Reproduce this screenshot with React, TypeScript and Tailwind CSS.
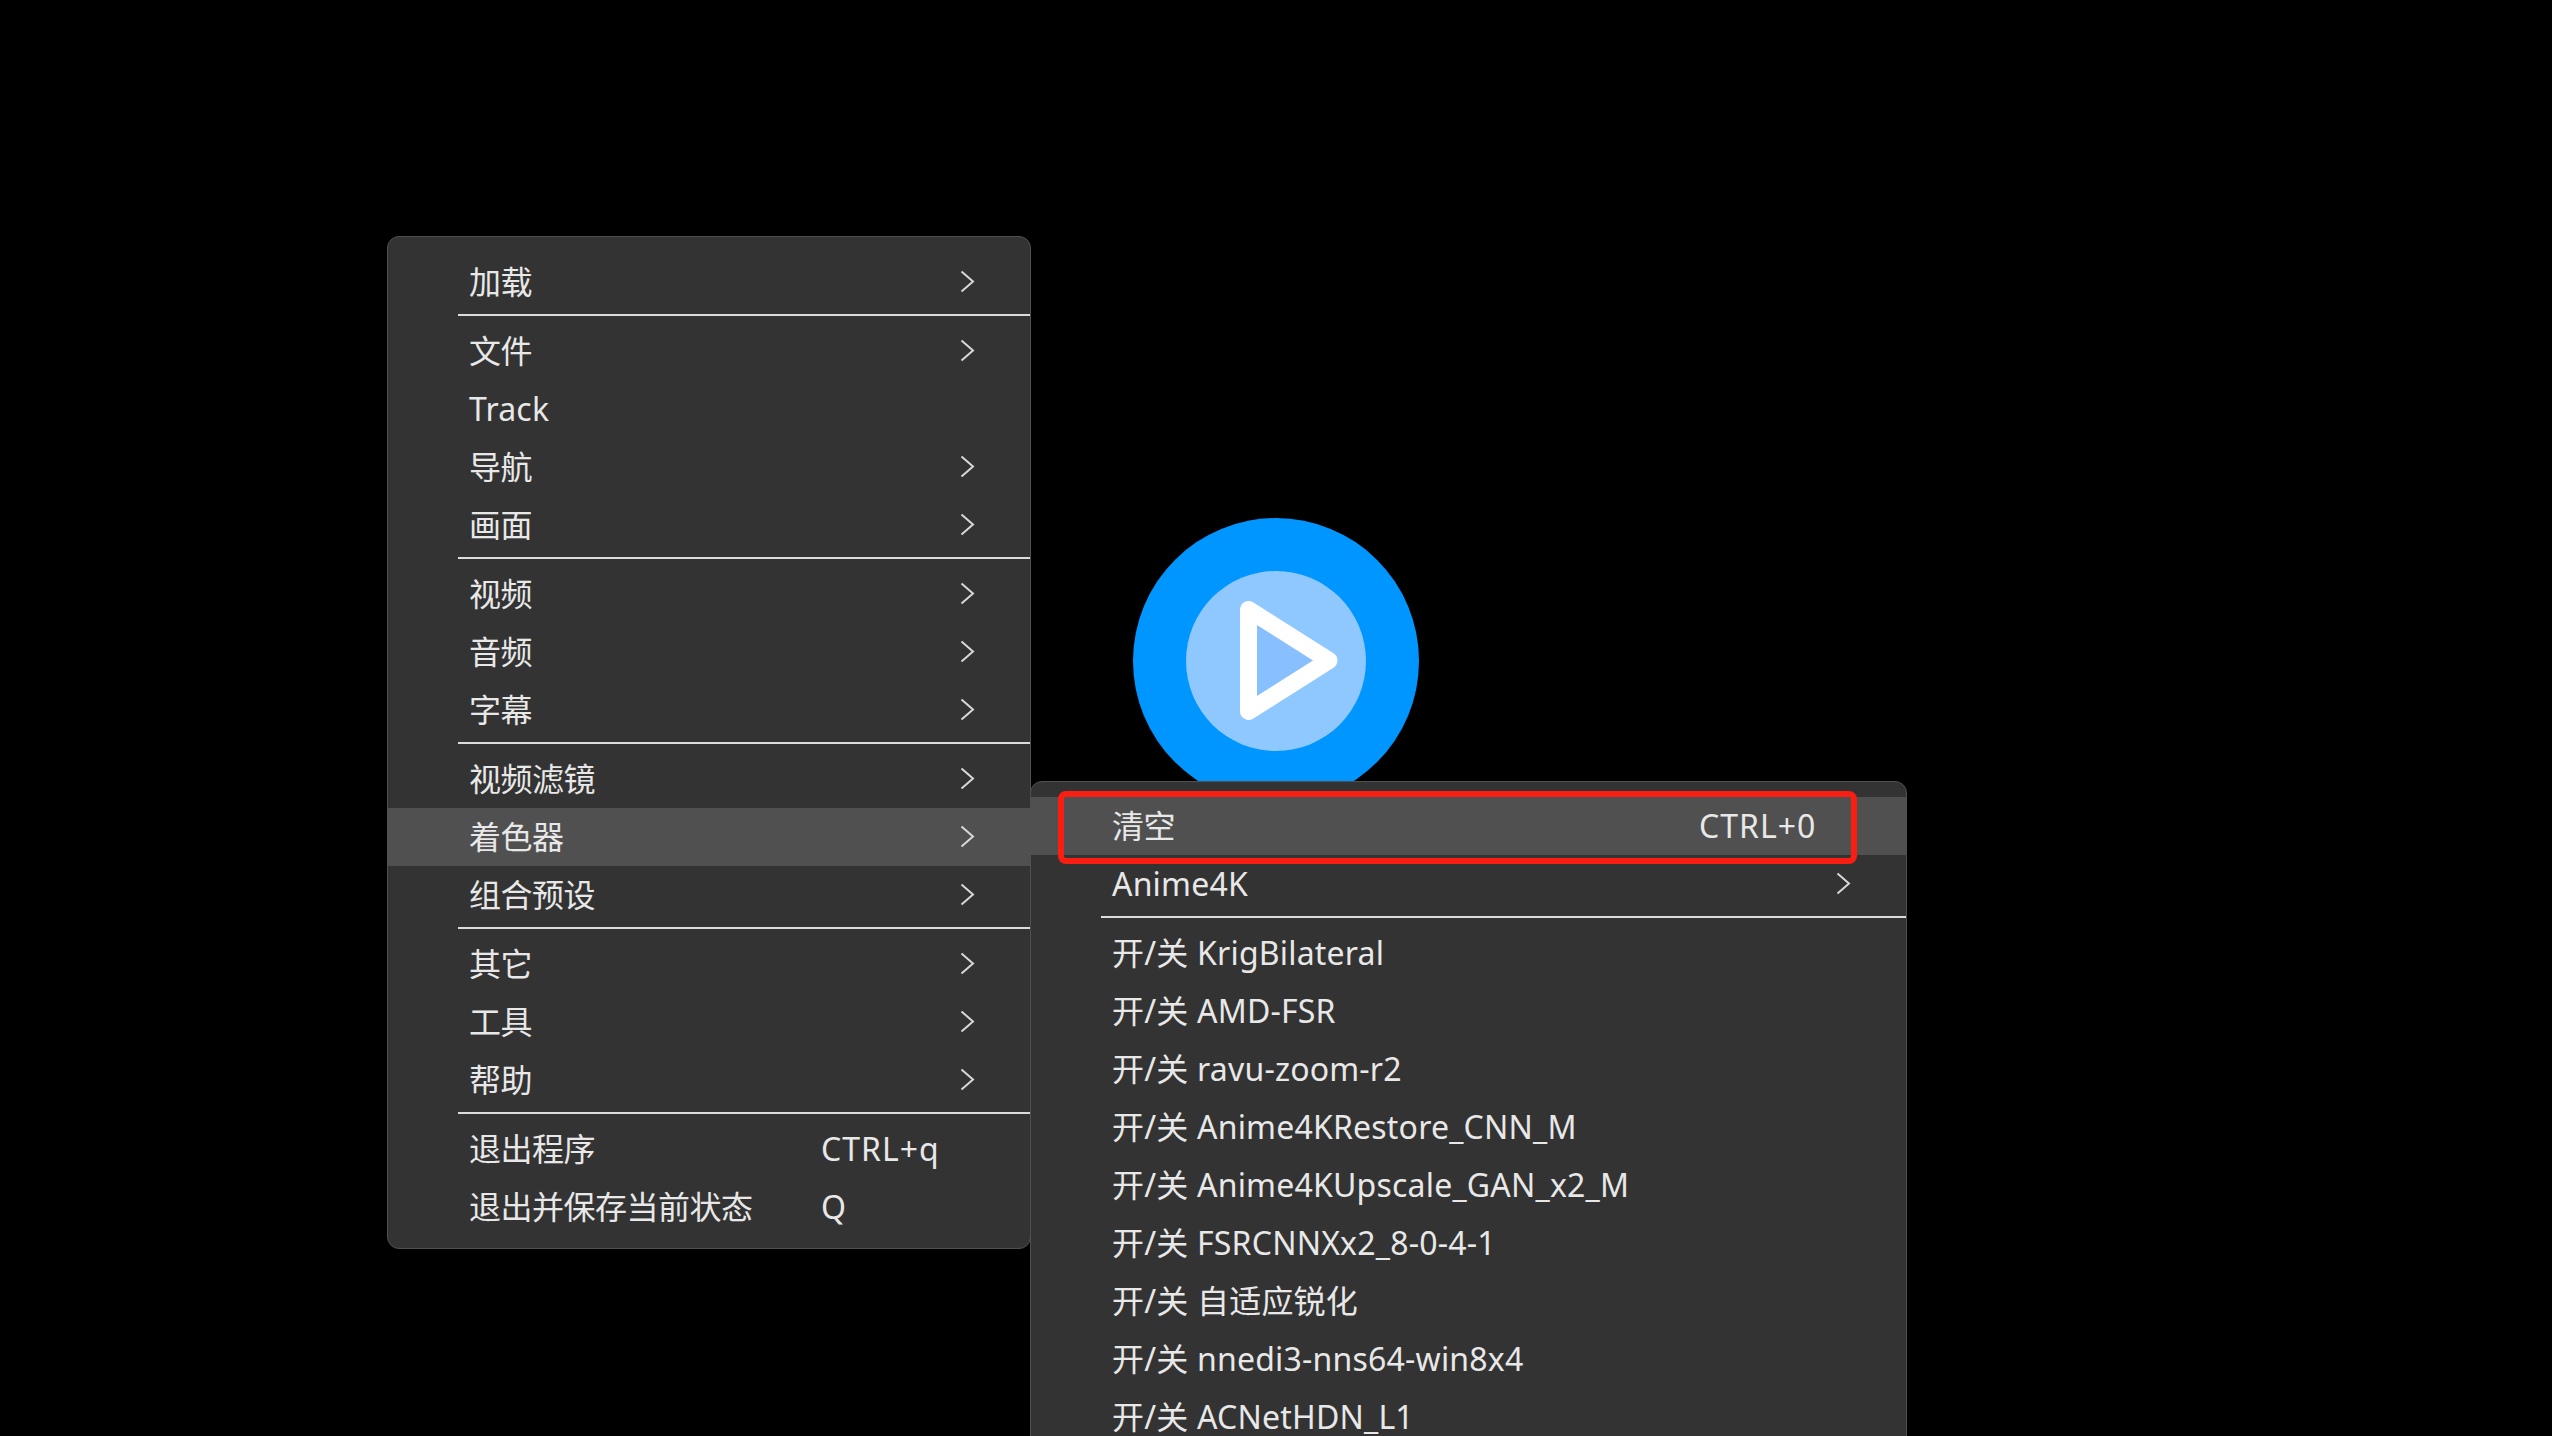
import React from "react";

type Row = { label?: string; shortcut?: string; arrow?: boolean; active?: boolean; sep?: boolean };

const mainMenu: Row[] = [
  { label: "加载", arrow: true },
  { sep: true },
  { label: "文件", arrow: true },
  { label: "Track" },
  { label: "导航", arrow: true },
  { label: "画面", arrow: true },
  { sep: true },
  { label: "视频", arrow: true },
  { label: "音频", arrow: true },
  { label: "字幕", arrow: true },
  { sep: true },
  { label: "视频滤镜", arrow: true },
  { label: "着色器", arrow: true, active: true },
  { label: "组合预设", arrow: true },
  { sep: true },
  { label: "其它", arrow: true },
  { label: "工具", arrow: true },
  { label: "帮助", arrow: true },
  { sep: true },
  { label: "退出程序", shortcut: "CTRL+q" },
  { label: "退出并保存当前状态", shortcut: "Q" },
];

const shaderMenu: Row[] = [
  { label: "清空", shortcut: "CTRL+0", active: true },
  { label: "Anime4K", arrow: true },
  { sep: true },
  { label: "开/关 KrigBilateral" },
  { label: "开/关 AMD-FSR" },
  { label: "开/关 ravu-zoom-r2" },
  { label: "开/关 Anime4KRestore_CNN_M" },
  { label: "开/关 Anime4KUpscale_GAN_x2_M" },
  { label: "开/关 FSRCNNXx2_8-0-4-1" },
  { label: "开/关 自适应锐化" },
  { label: "开/关 nnedi3-nns64-win8x4" },
  { label: "开/关 ACNetHDN_L1" },
];

function Chevron() {
  return (
    <svg width="15" height="23" viewBox="0 0 15 23" fill="none" className="shrink-0 -translate-y-px">
      <path d="M1.5 1.5 L13 11.5 L1.5 21.5" stroke="#d8d8d8" strokeWidth="2" />
    </svg>
  );
}

function Logo() {
  return (
    <svg width="286" height="288" viewBox="0 0 286 288" className="block">
      <circle cx="143" cy="144" r="143" fill="#0096ff" />
      <circle cx="143" cy="144" r="90" fill="#8fc7ff" />
      <path d="M115.5 92.5 L196 143.5 L115.5 194.5 Z" fill="#88bfff" stroke="#ffffff" strokeWidth="17" strokeLinejoin="round" />
    </svg>
  );
}

function MenuRow({ row, labelWidth }: { row: Row; labelWidth: string }) {
  if (row.sep) {
    return (
      <div className="h-[11px] pt-[3px] pl-[70px]">
        <div className="h-[2px] bg-[#dcdcdc]" />
      </div>
    );
  }
  // plain CJK labels sit a little tighter than the latin ones
  const tight = /^[\u4e00-\u9fff]+$/.test(row.label ?? "");
  return (
    <div className={`h-[58px] flex items-center pl-[81px] pr-[55px] ${row.active ? "bg-[#505050]" : ""}`}>
      <div className={`${labelWidth} shrink-0 whitespace-nowrap ${tight ? "tracking-[-0.5px]" : "tracking-[0.2px]"}`}>{row.label}</div>
      {row.shortcut ? <div className="whitespace-nowrap tracking-[1px]">{row.shortcut}</div> : null}
      {row.arrow ? (
        <div className="ml-auto">
          <Chevron />
        </div>
      ) : null}
    </div>
  );
}

export default function App() {
  return (
    <div className="h-[1436px] w-full overflow-hidden bg-black flex items-start pl-[387px] text-[32px] leading-none text-[#e8e8e8] font-['Noto_Sans','Noto_Sans_CJK_SC',sans-serif]">
      <div className="mt-[236px] w-[644px] shrink-0 rounded-xl border border-[#505050] bg-[#333333] pt-4 pb-3">
        {mainMenu.map((row, idx) => (
          <MenuRow key={idx} row={row} labelWidth="w-[352px]" />
        ))}
      </div>
      <div className="-ml-px w-[877px] shrink-0 flex flex-col">
        <div className="mt-[517px] ml-[103px]">
          <Logo />
        </div>
        <div className="relative -mt-6 rounded-t-xl border border-[#505050] bg-[#333333] pt-[15px]">
          {shaderMenu.map((row, idx) => (
            <MenuRow key={idx} row={row} labelWidth="w-[587px]" />
          ))}
          <div className="absolute left-[27px] top-[9px] h-[73px] w-[799px] rounded-lg border-[6px] border-[#fa1e12]" />
        </div>
      </div>
    </div>
  );
}
